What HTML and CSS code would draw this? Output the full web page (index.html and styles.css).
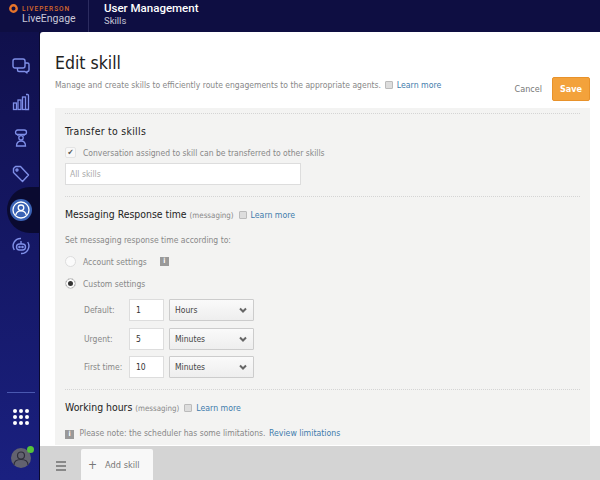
FILE: index.html
```html
<!doctype html>
<html lang="en">
  <head>
    <meta charset="UTF-8">
    <title>Edit skill</title>
    <link rel="stylesheet" href="styles.css">
  </head>
  <body>
    <header class="topbar">
      <div class="brand">
        <div class="brand-top">
          <svg class="brand-mark" width="9" height="9" viewBox="0 0 9 9"><circle cx="4.5" cy="4.5" r="3.2" fill="none" stroke="#e8742a" stroke-width="2.4"/></svg>
          <span class="brand-name">LIVEPERSON</span>
        </div>
        <div class="brand-product">LiveEngage</div>
      </div>
      <div class="app-title">
        <div class="app-name">User Management</div>
        <div class="app-sub">Skills</div>
      </div>
    </header>
    <div class="shell">
      <nav class="sidebar">
        <div class="nav-icons">
          <svg class="nav-icon" width="18" height="18" viewBox="0 0 18 18" fill="none" stroke="#7f8fe8" stroke-width="1.4" stroke-linejoin="round"><rect x="1" y="2" width="12" height="9" rx="2"/><path d="M13 6h2.5a1.5 1.5 0 0 1 1.5 1.5V13a1.5 1.5 0 0 1-1.5 1.5H15V16l-2-1.5H7A1.5 1.5 0 0 1 5.500 13v-2"/></svg>
          <svg class="nav-icon" width="18" height="18" viewBox="0 0 18 18" fill="none" stroke="#7f8fe8" stroke-width="1.3"><rect x="1.500" y="10" width="3" height="6.500"/><rect x="6" y="7" width="3" height="9.500"/><rect x="10.500" y="4" width="3" height="12.500"/><path d="M14 1.500h1.500a1 1 0 0 1 1 1V16.500h-3"/></svg>
          <svg class="nav-icon" width="18" height="18" viewBox="0 0 18 18" fill="none" stroke="#7f8fe8" stroke-width="1.3"><rect x="3.500" y="1" width="11" height="4.500" rx="2.200"/><path d="M6 5.500V7M12 5.500V7"/><circle cx="9" cy="8.800" r="2.200"/><path d="M4.500 17c0-3.200 1.800-5 4.500-5s4.500 1.800 4.500 5Z"/></svg>
          <svg class="nav-icon" width="18" height="18" viewBox="0 0 18 18" fill="none" stroke="#7f8fe8" stroke-width="1.4" stroke-linejoin="round"><path d="M1.500 3.500 3.500 1.500H8.500L16.500 10 10.500 16.500 1.500 7.500Z"/><circle cx="5" cy="5" r="1"/></svg>
          <div class="nav-active">
            <svg width="22" height="22" viewBox="0 0 22 22" fill="none" stroke="#fff" stroke-width="1.300"><circle cx="11" cy="11" r="8"/><circle cx="11" cy="8.800" r="2.800"/><path d="M5.800 16c.5-2.800 2.400-4.200 5.200-4.200s4.700 1.400 5.200 4.200"/></svg>
          </div>
          <svg class="nav-icon" width="18" height="18" viewBox="0 0 18 18" fill="none" stroke="#7f8fe8" stroke-width="1.4"><path d="M2.300 13A7.500 7.500 0 0 1 9 1.500"/><path d="M15.700 5A7.500 7.500 0 0 1 9 16.500"/><rect x="4.500" y="7" width="9" height="6" rx="3"/><circle cx="7.500" cy="10" r=".6"/><circle cx="10.500" cy="10" r=".6"/><path d="M9 4v3"/></svg>
        </div>
        <div class="nav-bottom">
          <div class="nav-rule"></div>
          <div class="apps-grid">
            <i></i><i></i><i></i><i></i><i></i><i></i><i></i><i></i><i></i>
          </div>
          <div class="avatar">
            <svg width="20" height="20" viewBox="0 0 20 20" fill="none" stroke="#2e2e3a" stroke-width="1.200"><circle cx="10" cy="7.500" r="3.500"/><path d="M3 17c0-3.500 3-5.500 7-5.500s7 2 7 5.500"/></svg>
            <span class="presence"></span>
          </div>
        </div>
      </nav>
      <div class="workspace">
        <main class="page">
          <div class="page-head">
            <div class="page-intro">
              <h1>Edit skill</h1>
              <p class="muted">Manage and create skills to efficiently route engagements to the appropriate agents. <span class="doc-icon"></span> <a href="#">Learn more</a></p>
            </div>
            <div class="page-actions">
              <a class="cancel" href="#">Cancel</a>
              <button class="save">Save</button>
            </div>
          </div>
          <div class="panel">
            <section class="block">
              <h2 class="wide">Transfer to skills</h2>
              <label class="check-row muted"><span class="check">&#10004;</span> Conversation assigned to skill can be transferred to other skills</label>
              <div class="skills-input">All skills</div>
            </section>
            <section class="block">
              <h2>Messaging Response time <small>(messaging)</small> <span class="doc-icon"></span> <a href="#">Learn more</a></h2>
              <p class="muted set-line">Set messaging response time according to:</p>
              <div class="radio-row muted"><span class="radio"></span> Account settings <span class="info">i</span></div>
              <div class="radio-row muted"><span class="radio on"></span> Custom settings</div>
              <div class="times">
                <span class="muted">Default:</span>
                <span class="num">1</span>
                <span class="unit">Hours <svg width="8" height="6" viewBox="0 0 8 6" fill="none" stroke="#666" stroke-width="2"><path d="M1 1.500 4 4.500 7 1.500"/></svg></span>
                <span class="muted">Urgent:</span>
                <span class="num">5</span>
                <span class="unit">Minutes <svg width="8" height="6" viewBox="0 0 8 6" fill="none" stroke="#666" stroke-width="2"><path d="M1 1.500 4 4.500 7 1.500"/></svg></span>
                <span class="muted">First time:</span>
                <span class="num">10</span>
                <span class="unit">Minutes <svg width="8" height="6" viewBox="0 0 8 6" fill="none" stroke="#666" stroke-width="2"><path d="M1 1.500 4 4.500 7 1.500"/></svg></span>
              </div>
            </section>
            <section class="block">
              <h2>Working hours <small>(messaging)</small> <span class="doc-icon"></span> <a href="#">Learn more</a></h2>
              <p class="muted note"><span class="info">i</span> Please note: the scheduler has some limitations. <a href="#">Review limitations</a></p>
            </section>
          </div>
        </main>
        <footer class="tabbar">
          <div class="burger"><i></i><i></i><i></i></div>
          <div class="tab"><span class="plus">+</span> <span>Add skill</span></div>
        </footer>
      </div>
    </div>
  </body>
</html>
```
FILE: styles.css
```css
html, body {
  height: 100%;
  margin: 0;
  overflow: hidden
}
body {
  background-color: #10104a;
  color: #333;
  display: flex;
  flex-direction: column;
  font-family: "DejaVu Sans Condensed", "DejaVu Sans", sans-serif;
  font-size: 8.500px;
  font-stretch: condensed
}
a {
  color: #3f7cac;
  font-size: 8.700px;
  text-decoration: none
}
.muted {
  color: #888
}
.topbar {
  background-color: #0e0e42;
  color: #fff;
  display: flex;
  flex: none;
  font-family: Roboto, sans-serif;
  font-stretch: normal;
  height: 32px
}
.brand {
  border-right: 1px solid #2c2c60;
  margin-right: 15px;
  padding: 4px 11px 0 9px;
  width: 68px
}
.brand-top {
  align-items: center;
  display: flex;
  gap: 4px;
  height: 9px
}
.brand-name {
  color: #d9692b;
  font-size: 6.500px;
  font-weight: 500;
  letter-spacing: 1px
}
.brand-product {
  color: #c8c8d8;
  font-size: 10.500px;
  line-height: 11px;
  margin-left: 13px;
  white-space: nowrap
}
.app-name {
  font-size: 11.500px;
  font-weight: 500;
  line-height: 14px;
  margin-top: 1px
}
.app-sub {
  color: #c4c4d4;
  font-size: 9.500px;
  line-height: 11px
}
.shell {
  display: flex;
  flex: 1;
  min-height: 0
}
.sidebar {
  background: linear-gradient(#10104c, #1a2080);
  border-right: 1px solid #0a0a30;
  display: flex;
  flex: none;
  flex-direction: column;
  justify-content: space-between;
  overflow: hidden;
  width: 39px
}
.nav-icons {
  align-items: center;
  display: flex;
  flex-direction: column;
  gap: 18px;
  padding: 25px 0 0 3px
}
.nav-icon {
  display: block
}
.nav-active {
  height: 22px;
  margin: -2px 0;
  position: relative;
  width: 22px
}
.nav-active::before {
  background-color: #0a0a30;
  border-radius: 24px 0 0 24px;
  content: "";
  height: 46px;
  left: -3px;
  position: absolute;
  top: -12px;
  width: 40px
}
.nav-active svg {
  background-color: #3a62b4;
  border-radius: 50%;
  display: block;
  position: relative
}
.nav-bottom {
  align-items: center;
  display: flex;
  flex-direction: column;
  padding: 0 0 12px 3px
}
.nav-rule {
  background-color: #4a58b0;
  height: 1px;
  margin-bottom: 16px;
  width: 28px
}
.apps-grid {
  display: grid;
  gap: 2px;
  grid-template-columns: repeat(3, 4px);
  margin-bottom: 23px
}
.apps-grid i {
  background-color: #fff;
  border-radius: 50%;
  height: 4px;
  width: 4px
}
.avatar {
  align-items: flex-end;
  background-color: #62626f;
  border-radius: 50%;
  display: flex;
  height: 20px;
  justify-content: center;
  position: relative;
  width: 20px
}
.presence {
  background-color: #56c43a;
  border-radius: 50%;
  height: 7px;
  position: absolute;
  right: -3px;
  top: -2px;
  width: 7px
}
.workspace {
  background-color: #fff;
  border-top-left-radius: 3px;
  display: flex;
  flex: 1;
  flex-direction: column;
  min-width: 0
}
.page {
  flex: 1;
  min-height: 0;
  overflow: hidden;
  padding: 0 10px 0 15px
}
.page-head {
  display: flex;
  height: 76px;
  justify-content: space-between
}
h1 {
  color: #222;
  font-size: 17.500px;
  font-weight: 400;
  line-height: 20px;
  margin: 21px 0 7px
}
.page-intro p {
  margin: 0
}
.page-actions {
  align-items: center;
  display: flex;
  flex: none;
  gap: 10px;
  height: 24px;
  margin-top: 45px
}
.cancel {
  color: #777;
  font-size: 9px
}
.save {
  background-color: #f3a23b;
  border: 1px solid #e8922a;
  border-radius: 2px;
  color: #fff;
  font-family: inherit;
  font-size: 9px;
  font-stretch: condensed;
  font-weight: bold;
  height: 24px;
  padding: 0;
  width: 38px
}
.doc-icon {
  background-color: #ddd;
  border: 1px solid #bbb;
  border-radius: 1px;
  display: inline-block;
  height: 6px;
  margin: 0 1px 0 2px;
  vertical-align: -1px;
  width: 6px
}
.panel {
  background-color: #f3f3f2;
  display: flow-root;
  padding: 0 10px
}
.block {
  border-top: 1px dotted #d4d4d4;
  margin-top: 5px;
  padding-bottom: 6px
}
h2 {
  color: #222;
  font-size: 10.400px;
  font-weight: 400;
  margin: 0;
  padding-top: 11px
}
h2.wide {
  letter-spacing: .3px
}
h2 small {
  color: #888;
  font-size: 7.900px
}
.check-row {
  align-items: center;
  display: flex;
  gap: 7px;
  margin-top: 10px
}
.check {
  background-color: #f8f8f8;
  border: 1px solid #e4e4e4;
  border-radius: 2px;
  color: #555;
  font-size: 8px;
  height: 9px;
  line-height: 9px;
  text-align: center;
  width: 9px
}
.skills-input {
  background-color: #fff;
  border: 1px solid #ddd;
  color: #aaa;
  height: 20px;
  line-height: 20px;
  margin-top: 5px;
  padding-left: 4px;
  width: 230px
}
.set-line {
  margin: 15px 0 0
}
.radio-row {
  align-items: center;
  display: flex;
  gap: 7px;
  margin-top: 11px
}
.radio {
  background-color: #fbfbfb;
  border: 1px solid #ddd;
  border-radius: 50%;
  height: 9px;
  width: 9px
}
.radio.on {
  background-color: #333;
  box-shadow: inset 0 0 0 2px #fbfbfb
}
.info {
  background-color: #999;
  color: #fff;
  display: inline-block;
  font-size: 7px;
  font-weight: bold;
  height: 9px;
  line-height: 9px;
  margin-left: 6px;
  text-align: center;
  width: 9px
}
.times {
  align-items: center;
  color: #444;
  display: grid;
  gap: 6.500px 5px;
  grid-template-columns: 40px 35px 85px;
  margin: 10px 0 0 19px;
  white-space: nowrap
}
.num {
  background-color: #fff;
  border: 1px solid #ddd;
  box-sizing: border-box;
  color: #333;
  height: 22px;
  line-height: 20px;
  padding-left: 6px
}
.unit {
  align-items: center;
  background: linear-gradient(#fafafa, #eee);
  border: 1px solid #ccc;
  border-radius: 1px;
  box-sizing: border-box;
  display: flex;
  height: 22px;
  justify-content: space-between;
  padding: 0 6px 0 5px
}
.note {
  margin: 15px 0 0
}
.note .info {
  margin: 0 3px 0 0
}
.note a {
  margin-left: 1px
}
.tabbar {
  align-items: flex-end;
  background-color: #d4d4d4;
  display: flex;
  flex: none;
  height: 34px
}
.burger {
  display: flex;
  flex-direction: column;
  gap: 2px;
  margin: 0 15px 9px 16px;
  width: 10px
}
.burger i {
  background-color: #888;
  height: 2px
}
.tab {
  align-items: center;
  background-color: #f8f8f8;
  border-radius: 2px 2px 0 0;
  color: #777;
  display: flex;
  font-size: 9.200px;
  gap: 8px;
  height: 31px;
  padding: 0 14px 0 7px;
  white-space: nowrap;
  width: 51px
}
.plus {
  font-size: 12px
}
```
